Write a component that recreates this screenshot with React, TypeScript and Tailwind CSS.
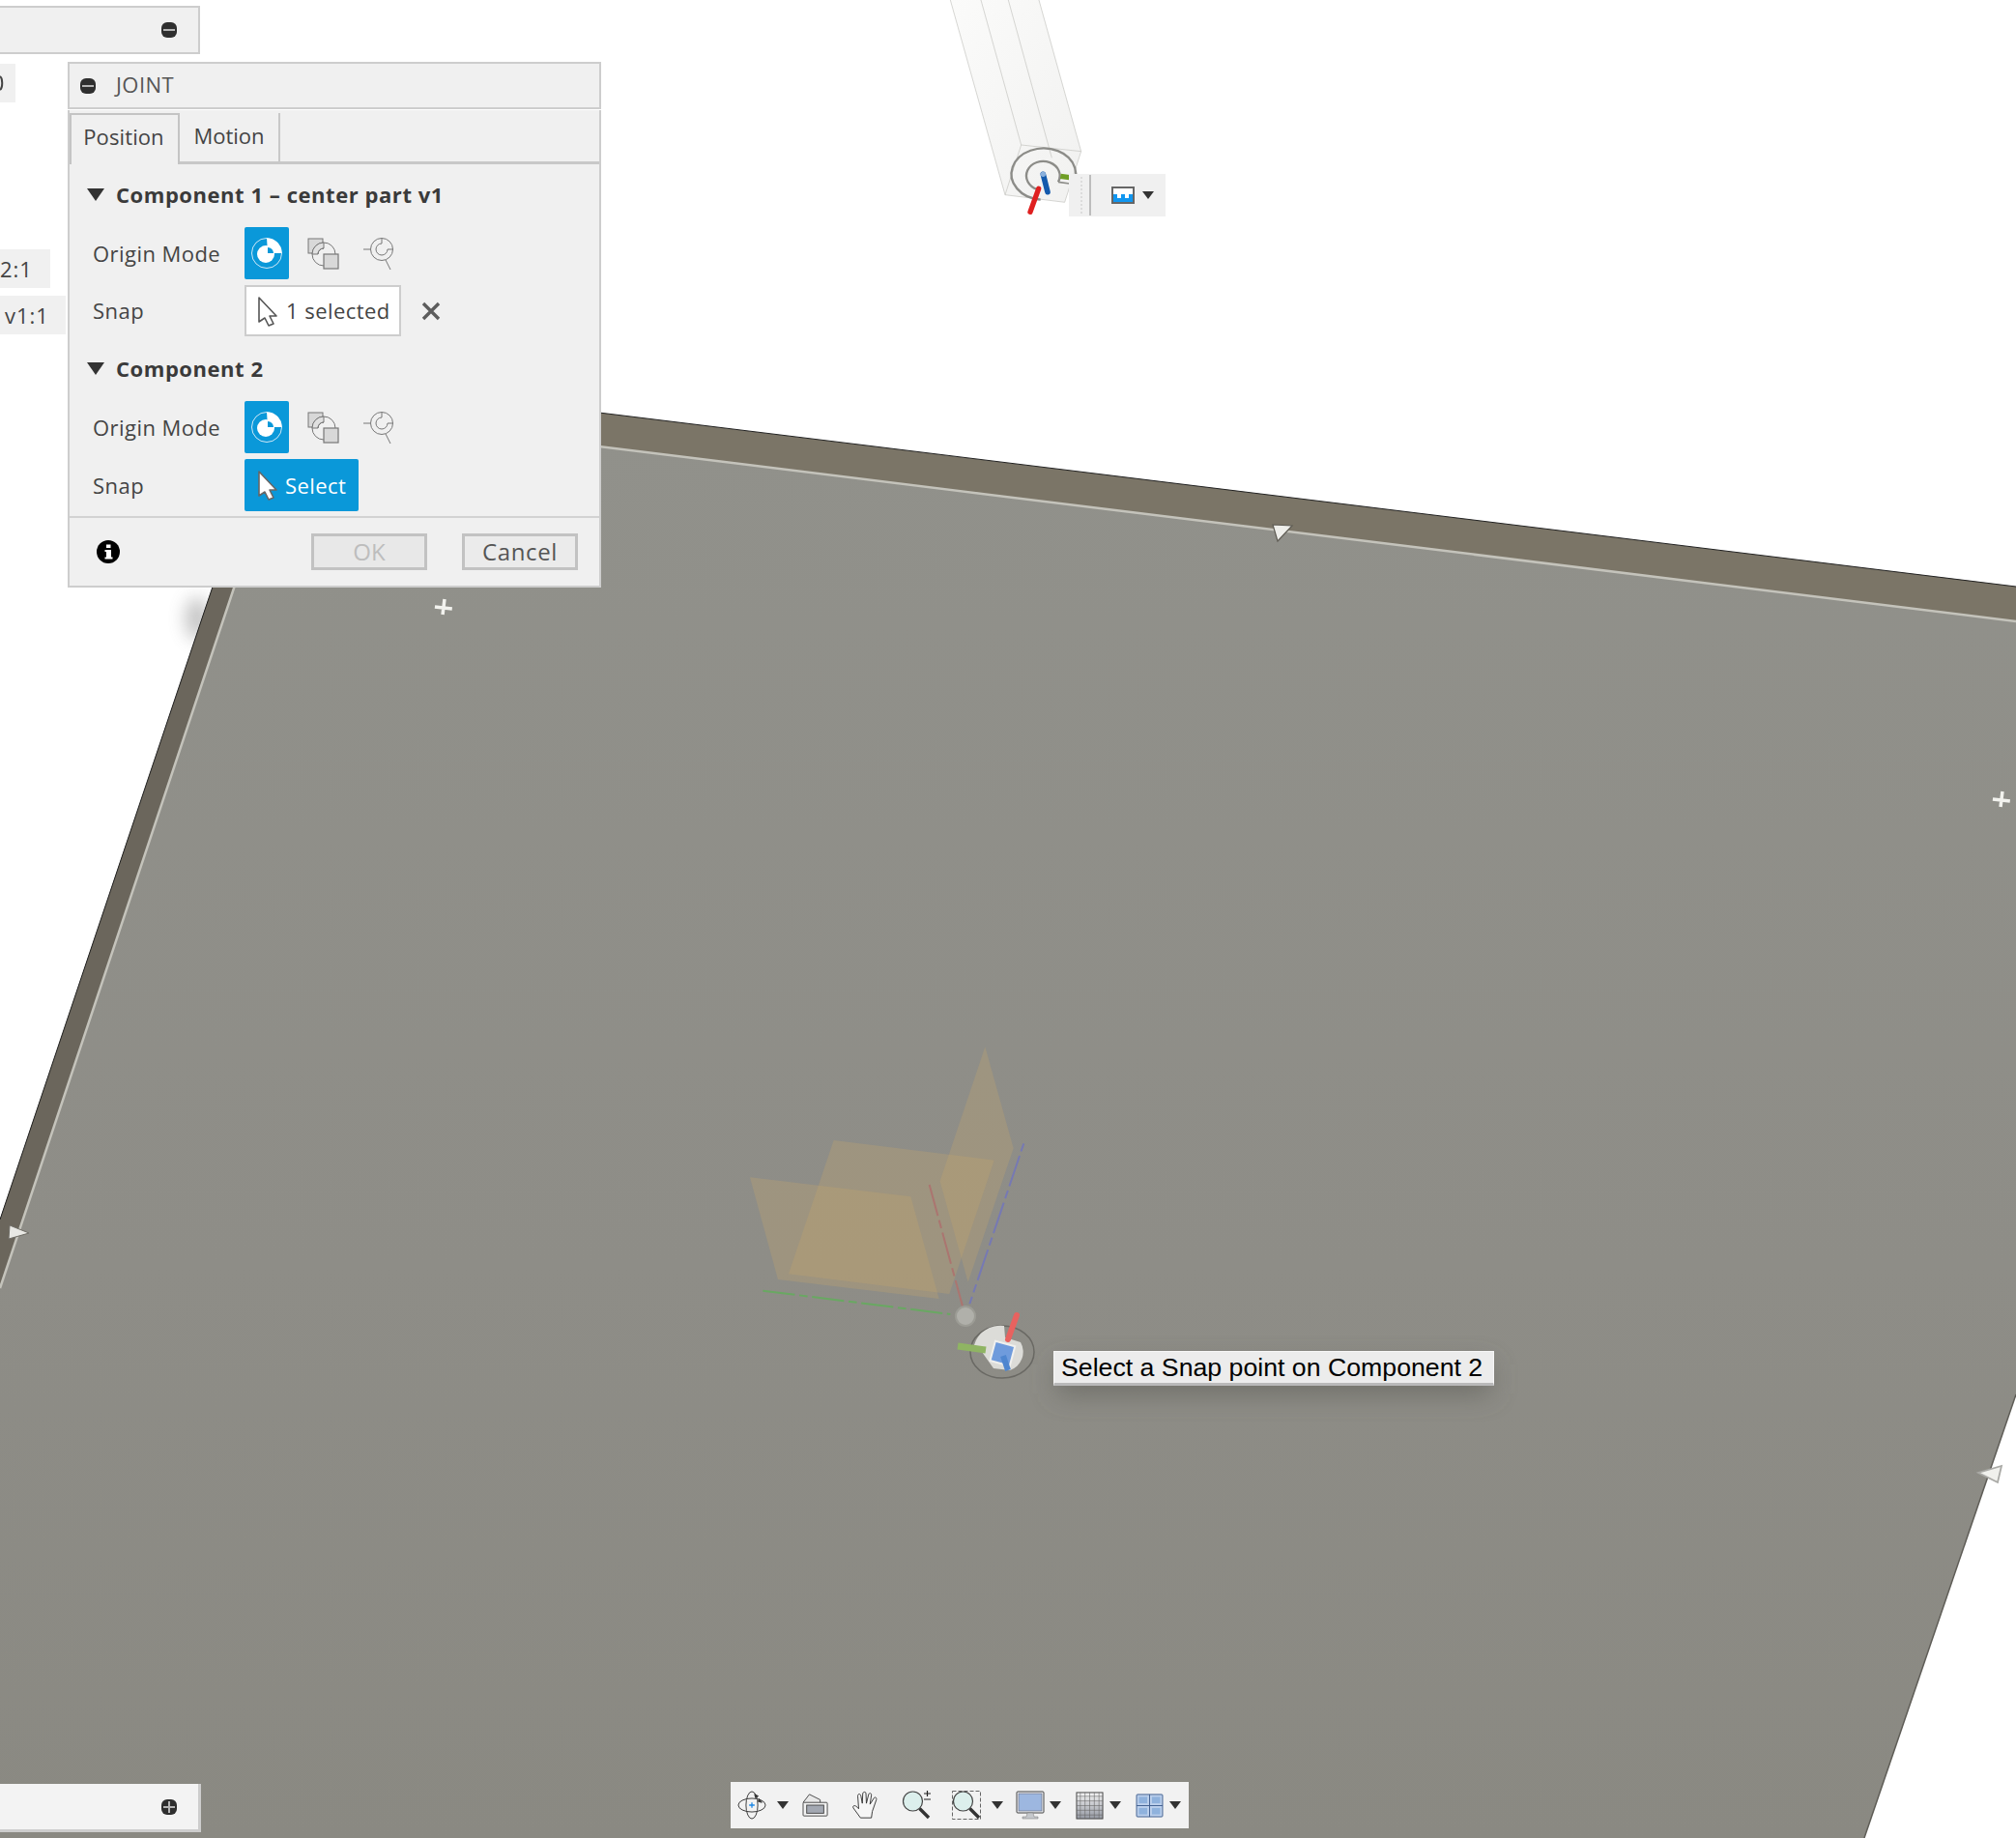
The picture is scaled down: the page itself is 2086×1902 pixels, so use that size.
const ui = "font-['Open_Sans','Noto_Sans',sans-serif] tracking-[0.45px]";

function RoundBadge({ plus = false }: { plus?: boolean }) {
  return (
    <svg width="16" height="16" viewBox="0 0 16 16">
      <rect width="16" height="16" rx="6" fill="#2f2f2f" />
      <rect x="2" y="7" width="12" height="2" fill="#b5b5b5" />
      {plus && <rect x="7" y="2" width="2" height="12" fill="#b5b5b5" />}
    </svg>
  );
}

function OriginIcon() {
  return (
    <svg width="36" height="36" viewBox="0 0 36 36">
      <circle cx="18" cy="18" r="15.5" fill="none" stroke="#cfe8f7" strokeWidth="1" />
      <circle cx="17" cy="19" r="9" fill="#fff" />
      <path d="M18 2.5 A15.5 15.5 0 0 1 33.5 18 L19 18 L18 2.5 Z" fill="#fff" />
      <path d="M19 12 A6 6 0 0 1 25 18 L19 18 Z" fill="#0a98d9" />
    </svg>
  );
}

function BetweenIcon() {
  return (
    <svg width="34" height="34" viewBox="0 0 34 34" fill="none" stroke="#777" strokeWidth="1">
      <rect x="1" y="1" width="15" height="15" fill="#d8d8d8" />
      <circle cx="17" cy="17" r="12" fill="#f0f0f0" />
      <path d="M17 5 A12 12 0 0 0 5 17 L11 17 A6 6 0 0 1 17 11 Z" fill="#e0e0e0" />
      <path d="M17 11 A6 6 0 0 0 11 17" />
      <path d="M23 17 A6 6 0 0 1 17 23" />
      <rect x="17" y="17" width="15" height="15" fill="#d8d8d8" strokeWidth="1.2" />
    </svg>
  );
}

function CenterIcon() {
  return (
    <svg width="34" height="34" viewBox="0 0 34 34" fill="none" stroke="#777" strokeWidth="1">
      <path d="M1 12 H8" />
      <circle cx="20" cy="12" r="11.5" />
      <path d="M20 6 A6 6 0 1 0 26 12 M26 12 H31.5 M20 1 V6" />
      <path d="M24 23 L29 33" />
    </svg>
  );
}

function Cursor({ fill, stroke }: { fill: string; stroke: string }) {
  return (
    <svg width="24" height="32" viewBox="0 0 24 32">
      <path d="M3 2 L21 21 L14 21 L18 29 L13 31 L9 23 L3 27 Z" fill={fill} stroke={stroke} strokeWidth="1.6" strokeLinejoin="round" />
    </svg>
  );
}

function SectionHead({ label }: { label: string }) {
  return (
    <div className="flex items-center h-[30px] pl-[18px]">
      <svg width="18" height="13" viewBox="0 0 18 13" className="mr-3">
        <path d="M0 0 H18 L9 13 Z" fill="#333" />
      </svg>
      <span className="text-[22px] font-bold tracking-[0.55px] text-[#3a3a3a]">{label}</span>
    </div>
  );
}

function OriginRow() {
  return (
    <div className="flex items-center h-[54px] pl-6">
      <span className="w-[157px] text-[22px] text-[#444]">Origin Mode</span>
      <div className="w-[46px] h-[54px] bg-[#0a98d9] rounded-[2px] flex items-center justify-center">
        <OriginIcon />
      </div>
      <div className="w-[34px] ml-[19px] mt-[1px] flex justify-center">
        <BetweenIcon />
      </div>
      <div className="w-[34px] ml-[23px] mt-[1px] flex justify-center">
        <CenterIcon />
      </div>
    </div>
  );
}

function JointPanel() {
  return (
    <div className={`absolute left-[70px] top-[64px] w-[552px] ${ui}`}>
      <div className="h-[49px] bg-[#f0f0f0] border-2 border-[#cdcdcd] flex items-center pl-[11px]">
        <RoundBadge />
        <span className="ml-[21px] pb-[2px] text-[22px] text-[#555]">JOINT</span>
      </div>
      <div className="mt-[1px] h-[494px] bg-[#f0f0f0] border-x-2 border-b-2 border-[#cdcdcd] flex flex-col">
        <div className="h-[56px] flex items-end">
          <div className="w-[114px] h-[53px] pb-[6px] pr-[2px] border-2 border-b-0 border-[#c4c4c4] flex items-center justify-center text-[22px] tracking-[0.1px] text-[#444]">
            Position
          </div>
          <div className="flex-1 h-[53px] border-b-[3px] border-[#c8c8c8] flex items-center">
            <div className="w-[104px] h-[50px] pb-[4px] border-r-2 border-[#c8c8c8] flex items-center justify-center text-[22px] tracking-normal text-[#444]">
              Motion
            </div>
          </div>
        </div>
        <div className="mt-[16px]">
          <SectionHead label="Component 1 – center part v1" />
        </div>
        <div className="mt-[19px]">
          <OriginRow />
        </div>
        <div className="mt-[6px] flex items-center h-[53px] pl-6">
          <span className="w-[157px] text-[22px] text-[#444]">Snap</span>
          <div className="w-[162px] h-[53px] bg-white border-2 border-[#cdcdcd] flex items-center pl-[10px]">
            <Cursor fill="#fff" stroke="#555" />
            <span className="ml-[7px] text-[22px] text-[#444]">1 selected</span>
          </div>
          <svg width="20" height="20" viewBox="0 0 20 20" className="ml-[21px]">
            <path d="M2 2 L18 18 M18 2 L2 18" stroke="#5c5c5c" strokeWidth="3.4" />
          </svg>
        </div>
        <div className="mt-[18px]">
          <SectionHead label="Component 2" />
        </div>
        <div className="mt-[19px]">
          <OriginRow />
        </div>
        <div className="mt-[6px] flex items-center h-[54px] pl-6">
          <span className="w-[157px] text-[22px] text-[#444]">Snap</span>
          <div className="w-[118px] h-[54px] bg-[#0a98d9] rounded-[2px] flex items-center pl-[12px]">
            <Cursor fill="#fff" stroke="#666" />
            <span className="ml-[6px] text-[22px] text-white">Select</span>
          </div>
        </div>
        <div className="mt-[5px] flex-1 border-t-2 border-[#d2d2d2] flex items-center pl-[28px] pr-[22px]">
          <svg width="24" height="24" viewBox="0 0 24 24">
            <circle cx="12" cy="12" r="12" fill="#000" />
            <rect x="10" y="10" width="5" height="9" fill="#fff" />
            <rect x="8.5" y="10" width="3" height="2" fill="#fff" />
            <rect x="8.5" y="17.5" width="8" height="2" fill="#fff" />
            <rect x="10" y="4.5" width="4.5" height="3.5" fill="#fff" />
          </svg>
          <div className="ml-auto w-[120px] h-[38px] bg-[#e8e8e8] border-[3px] border-[#c2c2c2] flex items-center justify-center text-[24px] tracking-normal text-[#bdbdbd]">
            OK
          </div>
          <div className="ml-[36px] w-[120px] h-[38px] bg-[#ebebeb] border-[3px] border-[#c2c2c2] flex items-center justify-center text-[24px] tracking-[0.6px] text-[#555]">
            Cancel
          </div>
        </div>
      </div>
    </div>
  );
}

function Scene() {
  return (
    <svg width="2086" height="1902" viewBox="0 0 2086 1902" className="absolute inset-0">
      <defs>
        <linearGradient id="face" x1="0" y1="0" x2="0" y2="1">
          <stop offset="0" stopColor="#91918b" />
          <stop offset="0.6" stopColor="#8e8d87" />
          <stop offset="1" stopColor="#8a8982" />
        </linearGradient>
        <linearGradient id="bar" x1="0" y1="0" x2="1" y2="1">
          <stop offset="0" stopColor="#fbfbfa" />
          <stop offset="1" stopColor="#f1f1f0" />
        </linearGradient>
        <filter id="soft" x="-100%" y="-100%" width="300%" height="300%">
          <feGaussianBlur stdDeviation="9" />
        </filter>
        <filter id="tip" x="-20%" y="-100%" width="140%" height="300%">
          <feGaussianBlur stdDeviation="14" />
        </filter>
      </defs>

      {/* plate */}
      <ellipse cx="204" cy="640" rx="12" ry="22" fill="#666" opacity="0.4" filter="url(#soft)" />
      <polygon points="294,387 2086,607 2086,1443 1929,1902 0,1902 0,1262" fill="#7b7567" />
      <polygon points="294,387 0,1262 0,1333 304,423" fill="#6b665c" />
      <polygon points="304,423 2086,643 2086,1443 1929,1902 0,1902 0,1333" fill="url(#face)" />
      <polyline points="0,1333 304,423 2086,643" fill="none" stroke="#c4c3bb" strokeWidth="2.5" />
      <polyline points="0,1262 294,387 2086,607" fill="none" stroke="#222" strokeWidth="1" />
      <polyline points="2086,1443 1929,1902" fill="none" stroke="#5f5d57" strokeWidth="1.5" />

      {/* edge handles */}
      <path d="M1317 543 L1337 544 L1322 560 Z" fill="#eeeeea" stroke="#5f5c54" strokeWidth="1.2" />
      <path d="M10 1268 L30 1276 L9 1282 Z" fill="#e8e8e4" stroke="#6f6d66" strokeWidth="1" />
      <path d="M2071 1517 L2067 1534 L2047 1524 Z" fill="#f0f0ec" stroke="#a9a9a5" strokeWidth="1.8" />
      <path d="M459 620 V636 M450 629 H468" stroke="#f2f2ee" strokeWidth="3.5" transform="rotate(7 459 628)" />
      <path d="M2071 819 V835 M2062 828 H2080" stroke="#f2f2ee" strokeWidth="3.5" transform="rotate(7 2071 827)" />

      {/* origin planes */}
      <g transform="translate(740 1060) scale(0.3333)">
        <polygon points="108,475 607,535 695,852 195,792" fill="#c4a46c" fillOpacity="0.3" />
        <polygon points="368,360 866,422 727,837 228,775" fill="#c4a46c" fillOpacity="0.3" />
        <polygon points="838,70 926,385 785,800 698,487" fill="#c4a46c" fillOpacity="0.3" />
        <path d="M148 827 L730 900" stroke="#69a862" strokeWidth="6" strokeDasharray="100 14 26 14" />
        <path d="M665 498 L768 875" stroke="#ab7570" strokeWidth="6" strokeDasharray="100 14 26 14" />
        <path d="M958 370 L790 868" stroke="#7679b4" strokeWidth="6" strokeDasharray="26 14 100 14" />
      </g>
      <circle cx="999" cy="1362" r="10" fill="#b0b0aa" stroke="#9c9c95" strokeWidth="2" />

      {/* lower triad */}
      <ellipse cx="1037" cy="1399" rx="33" ry="27" fill="none" stroke="#6a6964" strokeWidth="1.5" />
      <path d="M1008 1392 A28 26 0 0 1 1039 1372 L1040 1384 L1056 1389 A20 20 0 0 1 1045 1418 L1028 1416 L1016 1399 L1019 1396 Z" fill="#dcdcd8" />
      <path d="M1052 1361 L1043 1386" stroke="#e8625f" strokeWidth="6" strokeLinecap="round" />
      <path d="M991 1393 L1020 1397" stroke="#8fb463" strokeWidth="7" />
      <rect x="1027" y="1390" width="21" height="21" fill="#6f9bdc" stroke="#f0f0ee" strokeWidth="2" transform="rotate(15 1037 1400)" />
      <path d="M1038 1403 L1043 1418" stroke="#4f86cf" strokeWidth="6" />

      {/* extrusion at the top */}
      <g transform="translate(960 0) scale(0.3333)">
        <polygon points="70,0 345,0 476,470 425,628 240,605" fill="url(#bar)" stroke="none" />
        <path d="M70 0 L240 605 L425 628 L476 470 L345 0 M165 0 L290 450 L476 470 M250 0 L385 490" fill="none" stroke="#c2c2be" strokeWidth="2" />
        <path d="M290 450 L240 605" fill="none" stroke="#c2c2be" strokeWidth="2" />
        <path d="M440 588 A100 80 0 1 0 350 620" fill="none" stroke="#8c8c88" strokeWidth="7" />
        <path d="M405 565 A52 45 0 1 0 340 588" fill="none" stroke="#8c8c88" strokeWidth="7" />
        <path d="M405 565 L440 570" fill="none" stroke="#8c8c88" strokeWidth="5" />
        <path d="M344 586 L318 658" stroke="#df2020" strokeWidth="16" strokeLinecap="round" />
        <path d="M358 541 L372 596" stroke="#145aad" strokeWidth="17" strokeLinecap="round" />
        <circle cx="358" cy="541" r="8" fill="#8ab0dc" />
        <path d="M412 547 L440 551" stroke="#6f9e25" strokeWidth="16" />
      </g>

      {/* tooltip shadow */}
      <rect x="1094" y="1412" width="448" height="30" fill="#55554f" opacity="0.55" filter="url(#tip)" />
    </svg>
  );
}

function Caret() {
  return (
    <svg width="12" height="8" viewBox="0 0 12 8" className="block">
      <path d="M0 0 H12 L6 8 Z" fill="#333" />
    </svg>
  );
}

function OrbitIcon() {
  return (
    <svg width="30" height="30" viewBox="0 0 32 32" fill="none" stroke="#333" strokeWidth="1">
      <ellipse cx="16" cy="16" rx="15" ry="7.5" />
      <ellipse cx="16" cy="16" rx="6.5" ry="15" />
      <path d="M19 4 L23 6 L20 8 Z M24 9 L27 13 L23 12 Z" fill="#333" />
      <path d="M13 16 H19 M16 13 V19" stroke="#1e88e5" strokeWidth="1.4" />
    </svg>
  );
}

function CameraIcon() {
  return (
    <svg width="28" height="26" viewBox="0 0 30 28">
      <path d="M1 11 L8 2 L20 8 V11" fill="#e8e8e8" stroke="#444" />
      <rect x="1" y="11" width="27" height="15" rx="1" fill="#f2f2f2" stroke="#444" />
      <rect x="5" y="14" width="19" height="9" fill="#a3a8b2" stroke="#444" />
    </svg>
  );
}

function HandIcon() {
  return (
    <svg width="30" height="30" viewBox="0 0 32 32">
      <path d="M10 30 L2 19 C1 17 3 16 5 17 L8 20 L7 6 C7 3 10 3 10.5 6 L12 14 L12.5 3 C13 1 16 1 16 3 L16.5 14 L19 4 C20 2 22.5 3 22 5 L20.5 15 L25 8 C26.5 6.5 28 8 27.5 10 L23 23 L22 30 Z" fill="#f6f6f6" stroke="#333" strokeLinejoin="round" />
    </svg>
  );
}

function GlassIcon({ dashed = false, plus = false }: { dashed?: boolean; plus?: boolean }) {
  return (
    <svg width="30" height="30" viewBox="0 0 30 30" fill="none">
      {dashed && <rect x="0.5" y="0.5" width="29" height="29" stroke="#666" strokeDasharray="4 2" />}
      <circle cx="11.5" cy="11" r="10" fill="#dcefec" stroke="#444" strokeWidth="1.2" />
      <path d="M18.5 18.5 L28 28" stroke="#333" strokeWidth="3.4" />
      {plus && <path d="M23 3 H30 M26.5 0 V6 M23 9 H30" stroke="#222" strokeWidth="1.2" />}
    </svg>
  );
}

function MonitorIcon() {
  return (
    <svg width="30" height="30" viewBox="0 0 30 30">
      <rect x="1" y="1" width="28" height="22" rx="1" fill="#eceff4" stroke="#444" />
      <rect x="3" y="3" width="24" height="18" fill="#9db7e0" stroke="#667" strokeWidth="0.6" />
      <path d="M12 23 H18 L19 27 H23 V29 H7 V27 H11 Z" fill="#c5c8cc" stroke="#777" strokeWidth="0.5" />
    </svg>
  );
}

function GridIcon() {
  const lines = [5, 10, 15, 20, 25];
  return (
    <svg width="29" height="29" viewBox="0 0 30 30">
      <defs>
        <linearGradient id="gridfade" x1="0" y1="0" x2="0" y2="1">
          <stop offset="0" stopColor="#f4f4f4" />
          <stop offset="1" stopColor="#9498a2" />
        </linearGradient>
      </defs>
      <rect x="1" y="1" width="28" height="28" fill="url(#gridfade)" stroke="#444" />
      {lines.map((p) => (
        <g key={p}>
          <path d={`M${p} 1 V29`} stroke="#666" strokeWidth="0.6" />
          <path d={`M1 ${p} H29`} stroke="#666" strokeWidth="0.6" />
        </g>
      ))}
    </svg>
  );
}

function ViewportsIcon() {
  return (
    <svg width="29" height="25" viewBox="0 0 30 26">
      <rect x="1" y="1" width="28" height="24" rx="1" fill="#bcd0ec" stroke="#3f5f8f" />
      <path d="M15 1 V25 M1 13 H29" stroke="#3f5f8f" />
      <rect x="3.5" y="3.5" width="9" height="7" fill="#8fb2dd" />
      <rect x="17.5" y="3.5" width="9" height="7" fill="#8fb2dd" />
      <rect x="3.5" y="15.5" width="9" height="7" fill="#8fb2dd" />
      <rect x="17.5" y="15.5" width="9" height="7" fill="#8fb2dd" />
    </svg>
  );
}

function NavBar() {
  return (
    <div className="absolute left-[756px] top-[1844px] w-[474px] h-[48px] bg-[#f2f2f2] flex items-center pl-[7px]">
      <OrbitIcon />
      <div className="ml-[11px]"><Caret /></div>
      <div className="ml-[14px]"><CameraIcon /></div>
      <div className="ml-[23px]"><HandIcon /></div>
      <div className="ml-[22px]"><GlassIcon plus /></div>
      <div className="ml-[22px]"><GlassIcon dashed /></div>
      <div className="ml-[11px]"><Caret /></div>
      <div className="ml-[13px]"><MonitorIcon /></div>
      <div className="ml-[5px]"><Caret /></div>
      <div className="ml-[15px]"><GridIcon /></div>
      <div className="ml-[6px]"><Caret /></div>
      <div className="ml-[15px]"><ViewportsIcon /></div>
      <div className="ml-[6px]"><Caret /></div>
    </div>
  );
}

export default function App() {
  return (
    <div className="relative w-[2086px] h-[1902px] bg-white overflow-hidden">
      <Scene />

      {/* browser panel, cut off by the window edge */}
      <div className="absolute left-0 top-[6px] w-[207px] h-[50px] bg-[#f0f0f0] border-r-2 border-b-2 border-t-2 border-[#cdcdcd] flex items-center justify-end pr-[22px]">
        <RoundBadge />
      </div>
      <div className="absolute left-0 top-[66px] w-4 h-10 bg-[#f0f0f0] flex items-center">
        <svg width="4" height="16" viewBox="0 0 4 16">
          <path d="M0 1 C3 3 3 13 0 15" fill="none" stroke="#444" strokeWidth="2" />
        </svg>
      </div>
      <div className={`absolute left-0 top-[258px] w-[52px] h-10 bg-[#f0f0f0] flex items-center text-[22px] text-[#444] ${ui} tracking-[1px]`}>
        2:1
      </div>
      <div className={`absolute left-0 top-[306px] w-[68px] h-10 bg-[#f0f0f0] flex items-center pl-[5px] text-[22px] text-[#444] ${ui} tracking-[1px]`}>
        v1:1
      </div>

      <JointPanel />

      {/* selection filter mini toolbar */}
      <div className="absolute left-[1106px] top-[180px] w-[100px] h-[44px] bg-[#f0f0f0] flex items-center pl-[12px]">
        <div className="w-[2px] h-[38px] border-l-2 border-dotted border-[#dcdcdc]" />
        <div className="ml-[7px] w-[2px] h-[42px] bg-[#bdbdbd]" />
        <svg width="24" height="18" viewBox="0 0 24 18" className="ml-[21px]">
          <rect x="1" y="1" width="22" height="16" fill="#fff" stroke="#666" strokeWidth="2" />
          <path d="M2 8 H6 V12 H10 V8 H14 V12 H18 V8 H22 V16 H2 Z" fill="#1196f0" />
        </svg>
        <div className="ml-2"><Caret /></div>
      </div>

      {/* tooltip */}
      <div className="absolute left-[1090px] top-[1398px] w-[456px] h-[36px] bg-[#ececec] border border-[#f6f6f6] border-b-[3px] border-b-[#b9b9b9] pl-[7px] pt-[1px] flex items-center text-[26.7px] text-black font-['Liberation_Sans',sans-serif] whitespace-nowrap">
        Select a Snap point on Component 2
      </div>

      <NavBar />

      <div className="absolute left-0 top-[1846px] w-[208px] h-[50px] bg-[#f3f3f3] border-r-[3px] border-b-[3px] border-[#cdcdcd] flex items-center justify-end pr-[22px]">
        <RoundBadge plus />
      </div>
    </div>
  );
}
